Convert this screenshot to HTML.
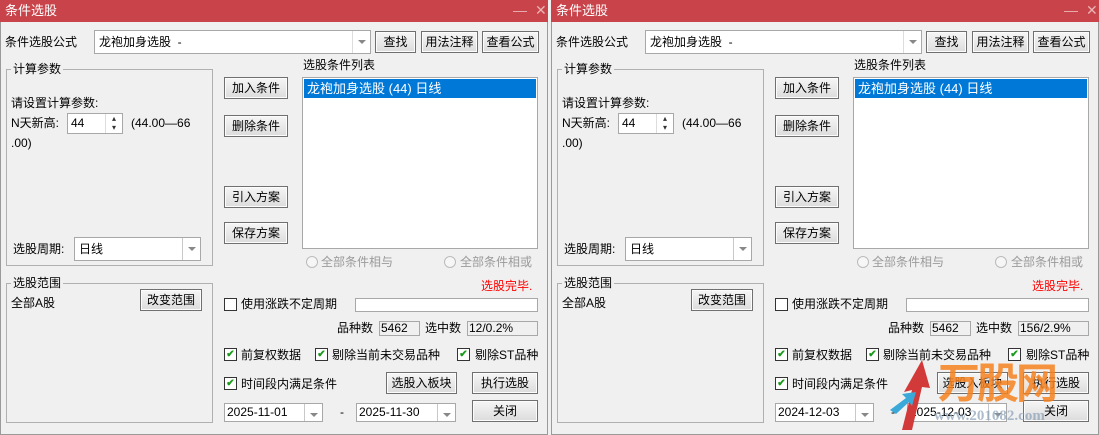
<!DOCTYPE html><html><head><meta charset="utf-8"><style>
*{box-sizing:border-box;margin:0;padding:0}
body{width:1099px;height:435px;background:#f0f0f0;position:relative;overflow:hidden;font-family:"Liberation Sans","Noto Sans CJK SC",sans-serif;font-size:12px;color:#000}
.dlg{position:absolute;top:0;width:548px;height:435px;background:#f0f0f0;border:1px solid #9a9a9a;border-top:none}
.dlg *{position:absolute;white-space:nowrap}
.tb{left:-1px;top:0;width:548px;height:22px;background:#c9434a;color:#fff;font-size:13px;line-height:22px;padding-left:5px}
.ctl{color:#e8b4b4;font-size:14px;top:0;line-height:20px;font-weight:100}
.t{line-height:16px}
.box{background:#fff;border:1px solid #a8a8a8}
.btn{background:linear-gradient(#f6f6f6,#dcdcdc);border:1px solid #707070;text-align:center;font-size:12px;box-shadow:inset 0 0 0 1px #fcfcfc}
.grp{border:1px solid #b0b0b0}
.lg{background:#f0f0f0;padding:0 2px;line-height:14px;font-size:12px}
.dd{border-left:1px solid #c8c8c8;top:0;right:0;height:100%;width:18px}
.dd:after{content:"";position:absolute;left:5px;top:9px;border:4px solid transparent;border-top:4px solid #888;border-bottom:none}
.cb{width:13px;height:13px;border:1px solid #333;background:#fff;font-size:10px;line-height:11px;text-align:center;color:#1a9a1a;font-weight:bold}
.rd{width:12px;height:12px;border-radius:50%;border:1px solid #bbb;background:#f6f6f6}
.grey{color:#9a9a9a}
</style></head><body>

<div class="dlg" style="left:0">
<div class="tb">条件选股</div><div class="ctl" style="left:512px">—</div><div class="ctl" style="left:534px">✕</div>
<div class="t" style="left:4px;top:34px">条件选股公式</div>
<div class="box" style="left:93px;top:30px;width:277px;height:24px;line-height:22px;padding-left:4px">龙袍加身选股&nbsp; -<div class="dd" style="border-color:#ddd"></div></div>
<div class="btn" style="left:374px;top:31px;width:41px;height:22px;line-height:20px">查找</div>
<div class="btn" style="left:420px;top:31px;width:57px;height:22px;line-height:20px">用法注释</div>
<div class="btn" style="left:481px;top:31px;width:57px;height:22px;line-height:20px">查看公式</div>
<div class="grp" style="left:5px;top:69px;width:207px;height:197px"></div>
<div class="lg" style="left:10px;top:62px">计算参数</div>
<div class="t" style="left:10px;top:95px">请设置计算参数:</div>
<div class="t" style="left:10px;top:115px">N天新高:</div>
<div class="box" style="left:66px;top:113px;width:56px;height:21px;line-height:19px;padding-left:3px;color:#000">44<div style="right:0;top:0;width:17px;height:19px;border-left:1px solid #ddd;font-size:8px;line-height:9px;text-align:center;color:#333">▴<br>▾</div></div>
<div class="t" style="left:130px;top:115px">(44.00—66</div>
<div class="t" style="left:10px;top:135px">.00)</div>
<div class="t" style="left:12px;top:241px">选股周期:</div>
<div class="box" style="left:73px;top:237px;width:127px;height:24px;line-height:22px;padding-left:4px">日线<div class="dd"></div></div>
<div class="btn" style="left:223px;top:77px;width:64px;height:22px;line-height:20px">加入条件</div>
<div class="btn" style="left:223px;top:115px;width:64px;height:22px;line-height:20px">删除条件</div>
<div class="btn" style="left:223px;top:186px;width:64px;height:22px;line-height:20px">引入方案</div>
<div class="btn" style="left:223px;top:222px;width:64px;height:22px;line-height:20px">保存方案</div>
<div class="t" style="left:302px;top:57px">选股条件列表</div>
<div class="box" style="left:301px;top:77px;width:236px;height:172px"><div style="left:1px;top:1px;width:232px;height:19px;background:#0078d7;color:#fff;line-height:19px;padding-left:3px;font-size:13px">龙袍加身选股 (44) 日线</div></div>
<div class="rd" style="left:305px;top:256px"></div><div class="t grey" style="left:320px;top:254px">全部条件相与</div>
<div class="rd" style="left:443px;top:256px"></div><div class="t grey" style="left:459px;top:254px">全部条件相或</div>
<div class="grp" style="left:5px;top:283px;width:207px;height:140px"></div>
<div class="lg" style="left:10px;top:276px">选股范围</div>
<div class="t" style="left:10px;top:295px">全部A股</div>
<div class="btn" style="left:139px;top:289px;width:62px;height:22px;line-height:20px">改变范围</div>
<div class="t" style="left:480px;top:278px;color:#f00">选股完毕.</div>
<div class="cb" style="left:223px;top:298px"></div><div class="t" style="left:240px;top:296px">使用涨跌不定周期</div>
<div class="box" style="left:354px;top:298px;width:183px;height:14px"></div>
<div class="t" style="left:336px;top:320px">品种数</div>
<div class="box" style="left:378px;top:321px;width:41px;height:15px;background:#f0f0f0;line-height:13px;padding-left:1px">5462</div>
<div class="t" style="left:424px;top:320px">选中数</div>
<div class="box" style="left:466px;top:321px;width:71px;height:15px;background:#f0f0f0;line-height:13px;padding-left:1px">12/0.2%</div>
<div class="cb" style="left:223px;top:348px">✔</div><div class="t" style="left:240px;top:347px">前复权数据</div>
<div class="cb" style="left:314px;top:348px">✔</div><div class="t" style="left:331px;top:347px">剔除当前未交易品种</div>
<div class="cb" style="left:456px;top:348px">✔</div><div class="t" style="left:474px;top:347px">剔除ST品种</div>
<div class="cb" style="left:223px;top:377px">✔</div><div class="t" style="left:240px;top:376px">时间段内满足条件</div>
<div class="btn" style="left:385px;top:372px;width:71px;height:22px;line-height:20px">选股入板块</div>
<div class="btn" style="left:471px;top:372px;width:66px;height:22px;line-height:20px">执行选股</div>
<div class="box" style="left:223px;top:403px;width:99px;height:19px;line-height:17px;padding-left:2px">2025-11-01<div class="dd"></div></div>
<div class="t" style="left:339px;top:404px">-</div>
<div class="box" style="left:355px;top:403px;width:100px;height:19px;line-height:17px;padding-left:2px">2025-11-30<div class="dd"></div></div>
<div class="btn" style="left:471px;top:400px;width:66px;height:22px;line-height:20px">关闭</div>
</div>

<div class="dlg" style="left:551px">
<div class="tb">条件选股</div><div class="ctl" style="left:512px">—</div><div class="ctl" style="left:534px">✕</div>
<div class="t" style="left:4px;top:34px">条件选股公式</div>
<div class="box" style="left:93px;top:30px;width:277px;height:24px;line-height:22px;padding-left:4px">龙袍加身选股&nbsp; -<div class="dd" style="border-color:#ddd"></div></div>
<div class="btn" style="left:374px;top:31px;width:41px;height:22px;line-height:20px">查找</div>
<div class="btn" style="left:420px;top:31px;width:57px;height:22px;line-height:20px">用法注释</div>
<div class="btn" style="left:481px;top:31px;width:57px;height:22px;line-height:20px">查看公式</div>
<div class="grp" style="left:5px;top:69px;width:207px;height:197px"></div>
<div class="lg" style="left:10px;top:62px">计算参数</div>
<div class="t" style="left:10px;top:95px">请设置计算参数:</div>
<div class="t" style="left:10px;top:115px">N天新高:</div>
<div class="box" style="left:66px;top:113px;width:56px;height:21px;line-height:19px;padding-left:3px">44<div style="right:0;top:0;width:17px;height:19px;border-left:1px solid #ddd;font-size:8px;line-height:9px;text-align:center;color:#333">▴<br>▾</div></div>
<div class="t" style="left:130px;top:115px">(44.00—66</div>
<div class="t" style="left:10px;top:135px">.00)</div>
<div class="t" style="left:12px;top:241px">选股周期:</div>
<div class="box" style="left:73px;top:237px;width:127px;height:24px;line-height:22px;padding-left:4px">日线<div class="dd"></div></div>
<div class="btn" style="left:223px;top:77px;width:64px;height:22px;line-height:20px">加入条件</div>
<div class="btn" style="left:223px;top:115px;width:64px;height:22px;line-height:20px">删除条件</div>
<div class="btn" style="left:223px;top:186px;width:64px;height:22px;line-height:20px">引入方案</div>
<div class="btn" style="left:223px;top:222px;width:64px;height:22px;line-height:20px">保存方案</div>
<div class="t" style="left:302px;top:57px">选股条件列表</div>
<div class="box" style="left:301px;top:77px;width:236px;height:172px"><div style="left:1px;top:1px;width:232px;height:19px;background:#0078d7;color:#fff;line-height:19px;padding-left:3px;font-size:13px">龙袍加身选股 (44) 日线</div></div>
<div class="rd" style="left:305px;top:256px"></div><div class="t grey" style="left:320px;top:254px">全部条件相与</div>
<div class="rd" style="left:443px;top:256px"></div><div class="t grey" style="left:459px;top:254px">全部条件相或</div>
<div class="grp" style="left:5px;top:283px;width:207px;height:140px"></div>
<div class="lg" style="left:10px;top:276px">选股范围</div>
<div class="t" style="left:10px;top:295px">全部A股</div>
<div class="btn" style="left:139px;top:289px;width:62px;height:22px;line-height:20px">改变范围</div>
<div class="t" style="left:480px;top:278px;color:#f00">选股完毕.</div>
<div class="cb" style="left:223px;top:298px"></div><div class="t" style="left:240px;top:296px">使用涨跌不定周期</div>
<div class="box" style="left:354px;top:298px;width:183px;height:14px"></div>
<div class="t" style="left:336px;top:320px">品种数</div>
<div class="box" style="left:378px;top:321px;width:41px;height:15px;background:#f0f0f0;line-height:13px;padding-left:1px">5462</div>
<div class="t" style="left:424px;top:320px">选中数</div>
<div class="box" style="left:466px;top:321px;width:71px;height:15px;background:#f0f0f0;line-height:13px;padding-left:1px">156/2.9%</div>
<div class="cb" style="left:223px;top:348px">✔</div><div class="t" style="left:240px;top:347px">前复权数据</div>
<div class="cb" style="left:314px;top:348px">✔</div><div class="t" style="left:331px;top:347px">剔除当前未交易品种</div>
<div class="cb" style="left:456px;top:348px">✔</div><div class="t" style="left:474px;top:347px">剔除ST品种</div>
<div class="cb" style="left:223px;top:377px">✔</div><div class="t" style="left:240px;top:376px">时间段内满足条件</div>
<div class="btn" style="left:385px;top:372px;width:71px;height:22px;line-height:20px">选股入板块</div>
<div class="btn" style="left:471px;top:372px;width:66px;height:22px;line-height:20px">执行选股</div>
<div class="box" style="left:223px;top:403px;width:99px;height:19px;line-height:17px;padding-left:2px">2024-12-03<div class="dd"></div></div>
<div class="t" style="left:339px;top:404px">-</div>
<div class="box" style="left:355px;top:403px;width:100px;height:19px;line-height:17px;padding-left:2px">2025-12-03<div class="dd"></div></div>
<div class="btn" style="left:471px;top:400px;width:66px;height:22px;line-height:20px">关闭</div>
<div style="left:386px;top:362px;font-size:42px;line-height:44px;font-weight:bold;color:#f58220;opacity:.85;letter-spacing:-3px">万股网</div>
<div style="left:382px;top:408px;font-size:15px;font-weight:bold;color:#8aa0b8;opacity:.7;font-family:'Liberation Serif',serif">www.201082.com</div>
<svg style="left:330px;top:350px" width="60" height="85"><path d="M20 80 L30 40 L22 42 L40 10 L48 38 L40 37 L30 80Z" fill="#d23a3a"/><path d="M8 60 L24 48 L20 44 L34 42 L30 56 L27 52 L14 64Z" fill="#3aa8d8"/></svg>
</div>
</body></html>
